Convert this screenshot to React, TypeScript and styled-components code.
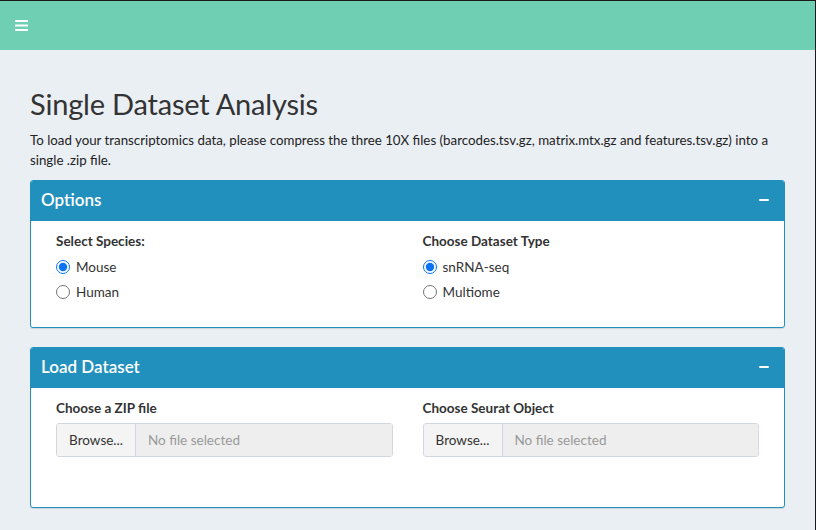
import React from "react";
import styled, { createGlobalStyle } from "styled-components";

const Global = createGlobalStyle`
  html, body { margin: 0; padding: 0; }
  body {
    background: #eaeff4;
    font-family: "Lato", "Liberation Sans", sans-serif;
    color: #333;
    font-size: 14px;
  }
  * { box-sizing: border-box; }
`;

const Page = styled.div`
  width: 816px;
  height: 530px;
  overflow: hidden;
  border-top: 1px solid #1a1a1a;
  border-right: 1px solid #1a1a1a;
  background: #eaeff4;
`;

const TopBar = styled.header`
  height: 49px;
  background: #6fcfb2;
  display: flex;
  align-items: center;
  padding-left: 15px;
`;

const Content = styled.main`
  padding: 36px 30px 0 30px;
  display: flex;
  flex-direction: column;
`;

const Title = styled.h1`
  margin: 0;
  font-size: 29px;
  font-weight: 400;
  line-height: 36px;
  letter-spacing: -0.2px;
  color: #333;
`;

const Intro = styled.p`
  margin: 8px 0 0 0;
  font-size: 13.3px;
  line-height: 20px;
  color: #222;
`;

const Box = styled.section<{ $mt: number; $h: number }>`
  margin-top: ${(p) => p.$mt}px;
  height: ${(p) => p.$h}px;
  border: 1px solid #2290bd;
  border-radius: 3px;
  background: #fff;
  box-shadow: 0 1px 1px rgba(0, 0, 0, 0.12);
  display: flex;
  flex-direction: column;
  overflow: hidden;
`;

const BoxHeader = styled.div`
  height: 40px;
  background: #2290bd;
  display: flex;
  align-items: center;
  justify-content: space-between;
  padding: 0 15px 3px 10px;
  color: #fff;
`;

const BoxTitle = styled.h3`
  margin: 0;
  font-size: 17px;
  font-weight: 600;
  color: #fff;
`;

const Minus = styled.span`
  width: 10px;
  height: 2px;
  background: #fff;
  border-radius: 1px;
`;

const BoxBody = styled.div`
  padding: 10px;
  display: grid;
  grid-template-columns: 1fr 1fr;
`;

const Col = styled.div`
  padding: 0 15px;
  display: flex;
  flex-direction: column;
`;

const Label = styled.label`
  font-weight: 700;
  font-size: 13.5px;
  line-height: 20px;
  color: #333;
  margin-bottom: 3px;
`;

const RadioRow = styled.label`
  display: flex;
  align-items: center;
  gap: 6px;
  height: 25px;
  font-size: 13.5px;
  color: #333;
  input {
    margin: 0;
    width: 14px;
    height: 14px;
    accent-color: #0a74f5;
  }
`;

const FileGroup = styled.div`
  display: flex;
  height: 34px;
  margin-top: 2px;
  border: 1px solid #d2d6de;
  border-radius: 3px;
  overflow: hidden;
`;

const BrowseBtn = styled.span`
  width: 79px;
  background: #f4f4f4;
  border-right: 1px solid #d2d6de;
  display: flex;
  align-items: center;
  justify-content: center;
  font-size: 13.5px;
  color: #333;
`;

const FileName = styled.span`
  flex: 1;
  background: #eeeeee;
  display: flex;
  align-items: center;
  padding-left: 12px;
  font-size: 13.5px;
  color: #999;
`;

const Bars = () => (
  <svg width="13" height="12" viewBox="0 0 13 12">
    <rect x="0" y="0" width="13" height="2" fill="#fff" />
    <rect x="0" y="4.5" width="13" height="2" fill="#fff" />
    <rect x="0" y="9" width="13" height="2" fill="#fff" />
  </svg>
);

const Radio = ({ name, label, checked }: { name: string; label: string; checked?: boolean }) => (
  <RadioRow>
    <input type="radio" name={name} defaultChecked={checked} />
    {label}
  </RadioRow>
);

const FileInput = () => (
  <FileGroup>
    <BrowseBtn>Browse...</BrowseBtn>
    <FileName>No file selected</FileName>
  </FileGroup>
);

export default function App() {
  return (
    <Page>
      <Global />
      <TopBar>
        <Bars />
      </TopBar>
      <Content>
        <Title>Single Dataset Analysis</Title>
        <Intro>
          To load your transcriptomics data, please compress the three 10X files (barcodes.tsv.gz, matrix.mtx.gz and
          features.tsv.gz) into a single .zip file.
        </Intro>
        <Box $mt={10} $h={148}>
          <BoxHeader>
            <BoxTitle>Options</BoxTitle>
            <Minus />
          </BoxHeader>
          <BoxBody>
            <Col>
              <Label>Select Species:</Label>
              <Radio name="species" label="Mouse" checked />
              <Radio name="species" label="Human" />
            </Col>
            <Col>
              <Label>Choose Dataset Type</Label>
              <Radio name="type" label="snRNA-seq" checked />
              <Radio name="type" label="Multiome" />
            </Col>
          </BoxBody>
        </Box>
        <Box $mt={19} $h={161}>
          <BoxHeader>
            <BoxTitle>Load Dataset</BoxTitle>
            <Minus />
          </BoxHeader>
          <BoxBody>
            <Col>
              <Label>Choose a ZIP file</Label>
              <FileInput />
            </Col>
            <Col>
              <Label>Choose Seurat Object</Label>
              <FileInput />
            </Col>
          </BoxBody>
        </Box>
      </Content>
    </Page>
  );
}
